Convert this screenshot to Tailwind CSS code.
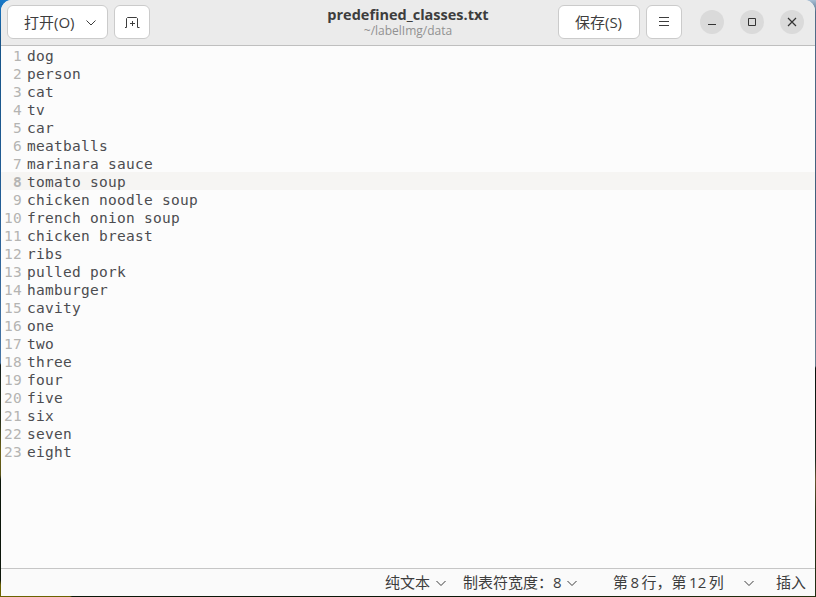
<!DOCTYPE html>
<html lang="zh-CN">
<head>
<meta charset="utf-8">
<title>predefined_classes.txt</title>
<script src="https://cdn.jsdelivr.net/npm/@tailwindcss/browser@4"></script>
</head>
<body class="w-[816px] h-[597px] overflow-hidden bg-[linear-gradient(to_bottom,#1778c8_0px,#175488_40px,#235e96_200px,#4775a5_363px,#14201c_365px,#26301a_420px,#6b6115_450px,#5a5518_475px,#0b160b_480px,#0d160b_580px,#6b6200_585px)] font-['Open_Sans','Noto_Sans_CJK_SC',sans-serif] text-[#3d3d3d]">
<div class="w-[816px] h-[597px] pl-px pr-px pb-px bg-[linear-gradient(to_right,transparent_0_70px,#0b1707_72px_500px,#27310f_816px)] bg-[length:816px_1px] bg-no-repeat bg-bottom relative">
  <div class="absolute right-0 top-0 w-3 h-[596px] bg-[linear-gradient(to_bottom,#a9bfd4_0px,#526d88_12px,#405f7d_200px,#667b8d_366px,#07100d_368px,#1b291f_460px,#65552f_480px,#283116_510px,#202b12_596px)]"></div>
  <main class="relative flex h-[596px] flex-col overflow-hidden rounded-t-[11px] bg-[#fcfcfc]">
    <header class="flex h-[46px] shrink-0 items-start border-b border-[#bfbfbf] bg-[#ebebeb] pl-1.5 pt-[5px]">
      <button class="flex h-[34px] w-[101px] items-center rounded-md border border-[#cbcbcb] bg-white pl-[15.500px] text-[15px]"><span class="w-[51.500px] whitespace-nowrap">打开(O)</span>
        <svg class="ml-[10px] mt-0.5" width="12" height="8" fill="none" stroke="#3d3d3d" stroke-width="1"><path d="M1.5 1.5 6 6 10.500 1.500"/></svg>
      </button>
      <button class="ml-1.5 flex h-[34px] w-9 items-center justify-center rounded-md border border-[#cbcbcb] bg-white">
        <svg width="16" height="14" fill="none" stroke="#3d3d3d"><path d="M1 12.500H2.500V3.500L3.500 2.500H12.500L13.500 3.500V12.500H15.500M8.500 6V11M6 8.500H11"/></svg>
      </button>
      <div class="ml-[158px] flex w-[200px] flex-col items-center">
        <h1 class="whitespace-nowrap text-[14.500px] leading-[19px] font-bold">predefined_classes.txt</h1>
        <p class="text-[12px] leading-[14px] text-[#919191]">~/labelImg/data</p>
      </div>
      <button class="ml-[50px] flex h-[34px] w-[82px] items-center justify-center rounded-md border border-[#cbcbcb] bg-white pr-px text-[15px]">保存(S)</button>
      <button class="ml-1.5 flex h-[34px] w-9 items-center justify-center rounded-md border border-[#cbcbcb] bg-white">
        <svg width="12" height="12" stroke="#3d3d3d"><path d="M1 1.500H11M1 5.500H11M1 9.500H11"/></svg>
      </button>
      <div class="ml-[18px] mt-[5px] flex gap-4">
        <span class="flex size-6 items-center justify-center rounded-full bg-[#dadada]"><svg width="10" height="10" stroke="#333"><path d="M1 7.500H9"/></svg></span>
        <span class="flex size-6 items-center justify-center rounded-full bg-[#dadada]"><svg width="10" height="10" fill="none" stroke="#333"><path d="M1.500 1.500H8.500V8.500H1.500Z"/></svg></span>
        <span class="flex size-6 items-center justify-center rounded-full bg-[#dadada]"><svg width="10" height="10" stroke="#333" stroke-width="1.200"><path d="M1 1 9 9M9 1 1 9"/></svg></span>
      </div>
    </header>
    <ol id="lines" class="flex-1 font-['DejaVu_Sans_Mono',monospace] text-[14.500px] leading-[18px] tracking-[0.270px] text-[#4c4c50]"></ol>
    <footer class="flex h-7 shrink-0 items-center border-t border-[#c6c6c6] bg-[#fafafa] pl-[384px] text-[15px] whitespace-nowrap">
      <span class="w-[46px]">纯文本</span>
      <svg class="ml-1" width="12" height="8" fill="none" stroke="#3d3d3d"><path d="M1.500 2 6 6.500 10.500 2"/></svg>
      <span class="ml-4 w-[90px]">制表符宽度：</span><span class="w-[9px]">8</span>
      <svg class="ml-1" width="12" height="8" fill="none" stroke="#3d3d3d"><path d="M1.500 2 6 6.500 10.500 2"/></svg>
      <span class="ml-[35px] w-[112px] [word-spacing:-1.400px]">第 8 行，第 12 列</span>
      <svg class="ml-[18px]" width="12" height="8" fill="none" stroke="#3d3d3d"><path d="M1.500 2 6 6.500 10.500 2"/></svg>
      <span class="ml-[21px]">插入</span>
    </footer>
  </main>
</div>
<script>
const labels = ['dog','person','cat','tv','car','meatballs','marinara sauce','tomato soup','chicken noodle soup','french onion soup','chicken breast','ribs','pulled pork','hamburger','cavity','one','two','three','four','five','six','seven','eight'];
const list = document.getElementById('lines');
labels.forEach((label, i) => {
  const row = document.createElement('li');
  row.className = i === 7 ? 'flex h-[18px] bg-[#f6f5f3] pt-px' : 'flex h-[18px] pt-px';
  const number = document.createElement('span');
  number.className = i === 7 ? 'w-[21px] mr-[5px] text-right font-bold text-[#b4b4b2]' : 'w-[21px] mr-[5px] text-right text-[#b4b4b2]';
  number.textContent = i + 1;
  const text = document.createElement('span');
  text.className = 'whitespace-pre';
  text.textContent = label;
  row.append(number, text);
  list.append(row);
});
</script>
</body>
</html>
